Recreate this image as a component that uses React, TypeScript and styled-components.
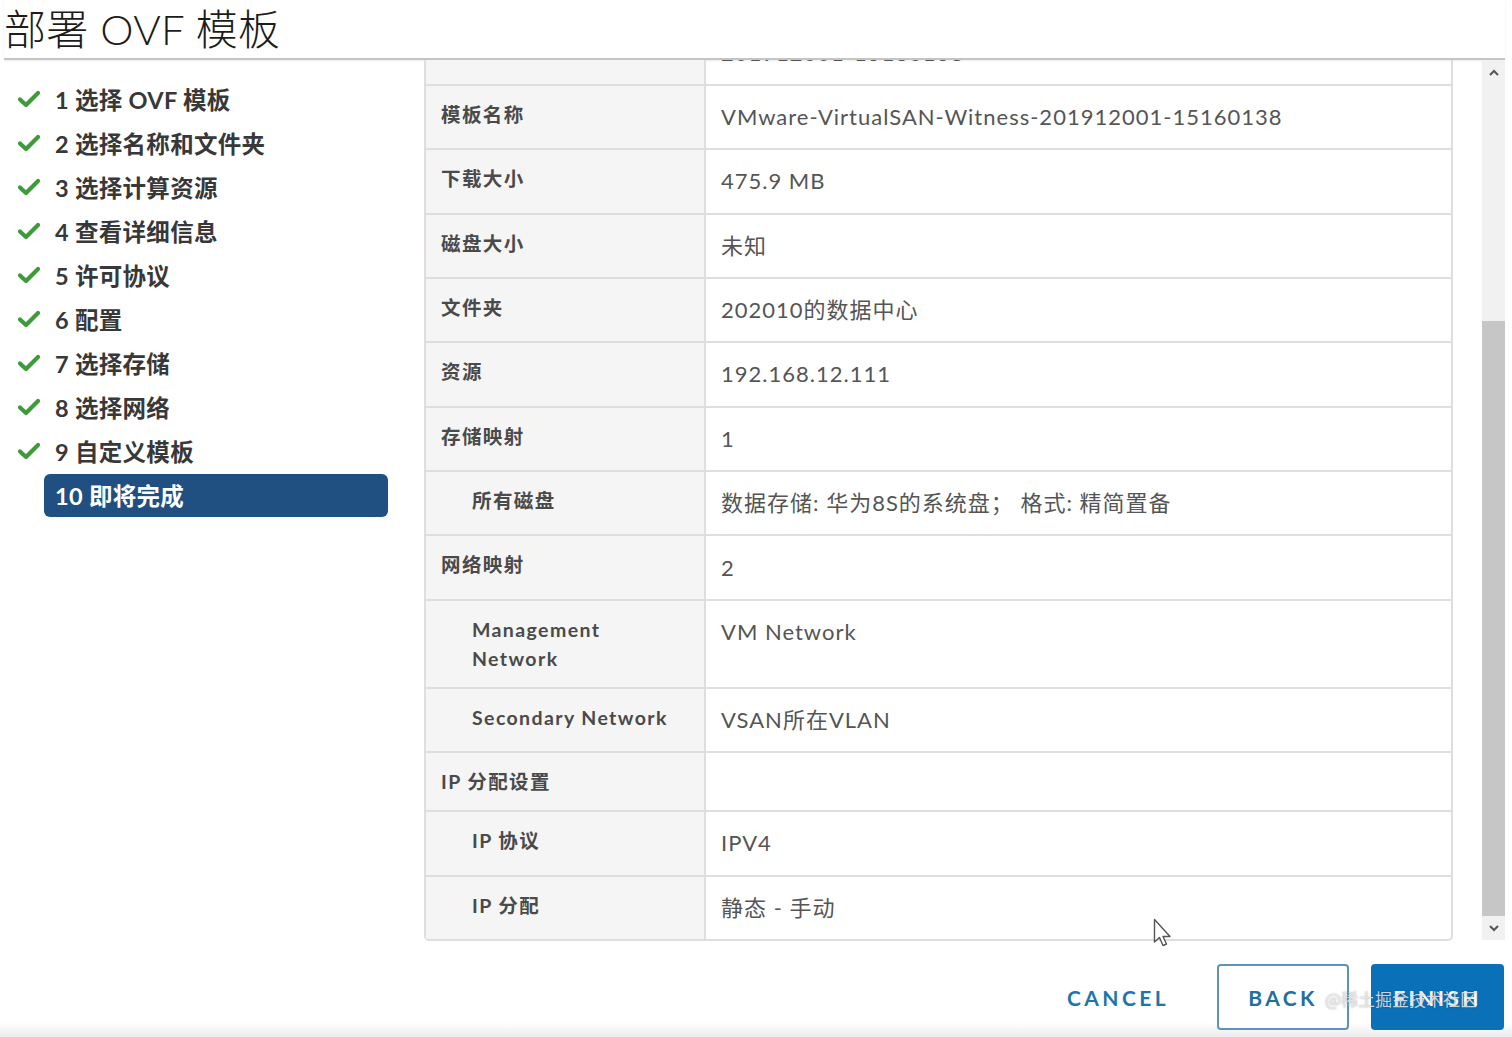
import React, { useLayoutEffect, useRef } from 'react';
import styled, { createGlobalStyle } from 'styled-components';

const GlobalStyle = createGlobalStyle`
  html, body {
    margin: 0;
    padding: 0;
    background: #ffffff;
  }
  body {
    font-family: "Open Sans", "Noto Sans CJK SC", sans-serif;
    color: #333;
  }
`;

type Step = { no: number; label: string; done: boolean };

const steps: Step[] = [
  { no: 1, label: '选择 OVF 模板', done: true },
  { no: 2, label: '选择名称和文件夹', done: true },
  { no: 3, label: '选择计算资源', done: true },
  { no: 4, label: '查看详细信息', done: true },
  { no: 5, label: '许可协议', done: true },
  { no: 6, label: '配置', done: true },
  { no: 7, label: '选择存储', done: true },
  { no: 8, label: '选择网络', done: true },
  { no: 9, label: '自定义模板', done: true },
  { no: 10, label: '即将完成', done: false },
];

type Row = { label: string; value?: string; sub?: boolean };

const rows: Row[] = [
  { label: '置备类型', value: '部署' },
  { label: '名称', value: '201912001-15160138' },
  { label: '模板名称', value: 'VMware-VirtualSAN-Witness-201912001-15160138' },
  { label: '下载大小', value: '475.9 MB' },
  { label: '磁盘大小', value: '未知' },
  { label: '文件夹', value: '202010的数据中心' },
  { label: '资源', value: '192.168.12.111' },
  { label: '存储映射', value: '1' },
  { label: '所有磁盘', value: '数据存储: 华为8S的系统盘； 格式: 精简置备', sub: true },
  { label: '网络映射', value: '2' },
  { label: 'Management Network', value: 'VM Network', sub: true },
  { label: 'Secondary Network', value: 'VSAN所在VLAN', sub: true },
  { label: 'IP 分配设置' },
  { label: 'IP 协议', value: 'IPV4', sub: true },
  { label: 'IP 分配', value: '静态 - 手动', sub: true },
];

const Check = () => (
  <svg width="22" height="18" viewBox="0 0 22 18">
    <path d="M2 9.5 L8 15 L20 3" fill="none" stroke="#3f9b3a" strokeWidth="4.2" strokeLinecap="round" strokeLinejoin="round" />
  </svg>
);

const Chevron = ({ up }: { up?: boolean }) => (
  <svg width="10" height="7" viewBox="0 0 10 7">
    <path d={up ? 'M1 6 L5 2 L9 6' : 'M1 1 L5 5 L9 1'} fill="none" stroke="#555" strokeWidth="2" />
  </svg>
);

const Cursor = () => (
  <svg width="20" height="30" viewBox="0 0 20 30">
    <path d="M1.5 1.5 L1.5 24 L6.5 19.5 L10 27.5 L13.5 26 L10 18.5 L17 18.5 Z" fill="#fff" stroke="#555" strokeWidth="1.4" strokeLinejoin="round" />
  </svg>
);

export default function App() {
  const scrollRef = useRef<HTMLDivElement>(null);

  useLayoutEffect(() => {
    const el = scrollRef.current;
    if (el) el.scrollTop = el.scrollHeight;
  }, []);

  return (
    <Page>
      <GlobalStyle />
      <Header>
        <Title>部署 OVF 模板</Title>
      </Header>
      <Main>
        <Sidebar>
          {steps.map((s) => (
            <StepItem key={s.no}>
              <StepIcon>{s.done && <Check />}</StepIcon>
              <StepLabel $active={!s.done}>
                {s.no} {s.label}
              </StepLabel>
            </StepItem>
          ))}
        </Sidebar>
        <ContentArea>
          <ScrollBox ref={scrollRef}>
            <Table>
              <tbody>
                {rows.map((r) => (
                  <tr key={r.label}>
                    <LabelCell $sub={r.sub}>{r.label}</LabelCell>
                    <ValueCell>{r.value}</ValueCell>
                  </tr>
                ))}
              </tbody>
            </Table>
          </ScrollBox>
          <ScrollBar>
            <ArrowBox>
              <Chevron up />
            </ArrowBox>
            <Track />
            <Thumb />
            <ArrowBox>
              <Chevron />
            </ArrowBox>
          </ScrollBar>
          <PointerSpot>
            <Cursor />
          </PointerSpot>
        </ContentArea>
      </Main>
      <Footer>
        <TextButton>CANCEL</TextButton>
        <OutlineButton>BACK</OutlineButton>
        <PrimaryButton>
          FINISH
          <Watermark>@稀土掘金技术社区</Watermark>
        </PrimaryButton>
      </Footer>
    </Page>
  );
}

const Page = styled.div`
  width: 1512px;
  height: 1037px;
  display: flex;
  flex-direction: column;
  overflow: hidden;
  background: linear-gradient(to bottom, #fff 0, #fff 1022px, #ececec 1037px);
`;

const Header = styled.div`
  height: 58px;
  flex-shrink: 0;
  margin: 0 7px 0 4px;
  border-bottom: 2px solid #c4c4c4;
  box-shadow: 0 1px 2px rgba(0, 0, 0, 0.08);
  display: flex;
  align-items: center;
`;

const Title = styled.h1`
  margin: 0 0 6px 0;
  font-family: "Lato", "Noto Sans CJK SC", sans-serif;
  font-weight: 300;
  font-size: 42px;
  letter-spacing: 0.3px;
  color: #1c1c1c;
`;

const Main = styled.div`
  height: 881px;
  flex-shrink: 0;
  display: flex;
`;

const Sidebar = styled.div`
  width: 424px;
  flex-shrink: 0;
  padding-top: 17px;
  box-sizing: border-box;
  display: flex;
  flex-direction: column;
`;

const StepItem = styled.div`
  height: 44px;
  display: flex;
  align-items: center;
`;

const StepIcon = styled.div`
  width: 44px;
  padding-left: 18px;
  box-sizing: border-box;
  display: flex;
  align-items: center;
`;

const StepLabel = styled.div<{ $active?: boolean }>`
  width: 344px;
  height: 43px;
  box-sizing: border-box;
  padding-left: 11px;
  display: flex;
  align-items: center;
  border-radius: 6px;
  font-family: "Lato", "Noto Sans CJK SC", sans-serif;
  font-weight: 700;
  font-size: 23.5px;
  letter-spacing: 0.3px;
  color: ${(p) => (p.$active ? '#ffffff' : '#383838')};
  background: ${(p) => (p.$active ? '#1f5081' : 'transparent')};
`;

const ContentArea = styled.div`
  position: relative;
  flex: 1;
  display: flex;
  gap: 29px;
  padding-right: 8px;
`;

const ScrollBox = styled.div`
  width: 1029px;
  height: 881px;
  overflow: hidden;
`;

const Table = styled.table`
  width: 100%;
  border-collapse: separate;
  border-spacing: 0;
  border: 2px solid #dedede;
  border-top: none;
  border-radius: 0 0 5px 5px;
  table-layout: fixed;

  tr + tr td {
    border-top: 2px solid #dedede;
  }
`;

const LabelCell = styled.td<{ $sub?: boolean }>`
  width: 280px;
  box-sizing: border-box;
  vertical-align: top;
  padding: 14px 26px 14px ${(p) => (p.$sub ? '46px' : '15px')};
  background: #f5f5f5;
  border-right: 2px solid #dedede;
  font-family: "Lato", "Noto Sans CJK SC", sans-serif;
  font-weight: 700;
  font-size: 19.5px;
  letter-spacing: 1.4px;
  line-height: 29px;
  color: #4a4a4a;
`;

const ValueCell = styled.td`
  vertical-align: top;
  padding: 16.2px 16px 16.2px 15px;
  font-family: "Lato", "Noto Sans CJK SC", sans-serif;
  font-size: 22px;
  letter-spacing: 1px;
  line-height: 30px;
  color: #555;
`;

const ScrollBar = styled.div`
  width: 23px;
  height: 880px;
  flex-shrink: 0;
  background: #f1f1f1;
  display: flex;
  flex-direction: column;
`;

const ArrowBox = styled.div`
  height: 24px;
  display: flex;
  align-items: center;
  justify-content: center;
`;

const Track = styled.div`
  flex: 1;
`;

const Thumb = styled.div`
  height: 595px;
  background: #c6c6c6;
`;

const PointerSpot = styled.div`
  position: absolute;
  left: 729px;
  top: 858px;
`;

const Footer = styled.div`
  flex: 1;
  display: flex;
  align-items: flex-start;
  justify-content: flex-end;
  padding: 23px 8px 0 0;
  gap: 22px;
`;

const ButtonBase = styled.button`
  height: 66px;
  box-sizing: border-box;
  border-radius: 4px;
  font-family: "Lato", sans-serif;
  font-weight: 700;
  font-size: 21px;
  letter-spacing: 3.4px;
  cursor: pointer;
`;

const TextButton = styled(ButtonBase)`
  background: transparent;
  border: none;
  color: #1d76a8;
  padding: 0 26px;
`;

const OutlineButton = styled(ButtonBase)`
  width: 132px;
  background: #fff;
  border: 2px solid #5f93b6;
  color: #1f6f9f;
`;

const PrimaryButton = styled(ButtonBase)`
  position: relative;
  width: 133px;
  background: #0a70b8;
  border: none;
  color: #fff;
`;

const Watermark = styled.span`
  position: absolute;
  left: -46px;
  top: 22px;
  font-family: "Noto Sans CJK SC", sans-serif;
  font-weight: 400;
  font-size: 17px;
  letter-spacing: 0;
  color: rgba(235, 235, 235, 0.85);
  text-shadow: 0 0 2px rgba(0, 0, 0, 0.35);
  white-space: nowrap;
  pointer-events: none;
`;
